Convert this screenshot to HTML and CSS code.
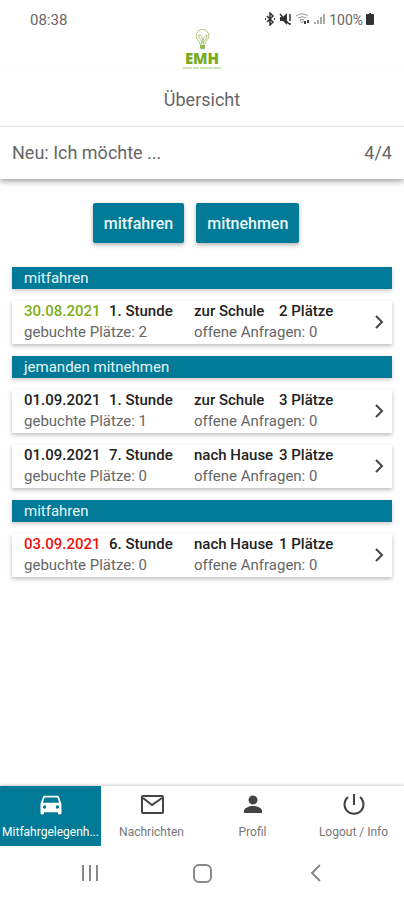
FILE: index.html
```html
<!DOCTYPE html>
<html lang="de">
<head>
  <meta charset="UTF-8">
  <meta name="viewport" content="width=device-width, initial-scale=1.0">
  <title>EMH Übersicht</title>
  <link rel="stylesheet" href="styles.css">
</head>
<body>

  <!-- Header -->
  <header>
    <div class="brand">
      <span class="time">08:38</span>
      <svg class="logo" width="40" height="42" viewBox="0 0 40 42">
        <g fill="none" stroke="#a9c77c" stroke-width="1">
          <path d="M18 16c-1-4-4-5-4-8a6 6 0 0 1 13 0c0 3-3 4-4 8z"/>
          <path d="M20 15c-1-4-4-5-3-8 3 0 4 4 3 8zM21 15c0-4 1-7 4-8 0 4-2 5-4 8z"/>
        </g>
        <path d="M18 17h5v3l-1 1h-3l-1-1z" fill="#8db64b"/>
        <text x="20" y="36" text-anchor="middle" class="logo-name">EMH</text>
        <path d="M1 40h38" stroke="#a5c66b" stroke-width="1" stroke-dasharray="9 1 6 1 12 1"/>
      </svg>
      <div class="status">
        <svg width="12" height="14" viewBox="0 0 12 14" fill="none" stroke="#333" stroke-width="1.500">
          <path d="M3 4l6 6-3 3V1l3 3-6 6"/>
          <path d="M1 7h1M10 7h1" stroke-width="2"/>
        </svg>
        <svg width="13" height="14" viewBox="0 0 13 14">
          <path d="M1 5h3l4-4v12L4 9H1z" fill="#333"/>
          <path d="M1 2l9 10M11 2v7M11 11v2" stroke="#333" stroke-width="1.500" fill="none"/>
        </svg>
        <svg width="16" height="14" viewBox="0 0 16 14">
          <path d="M1 4a10 10 0 0 1 12 0M3 6a7 7 0 0 1 8 0M5 8a4 4 0 0 1 4 0L7 11z" fill="none" stroke="#999" stroke-width="1"/>
          <path d="M10 9v3M13 8v3" stroke="#444" stroke-width="2"/>
        </svg>
        <svg width="12" height="14" viewBox="0 0 12 14" stroke="#aaa" stroke-width="2">
          <path d="M1 10v2M4 8v4M7 5v7M10 2v10"/>
        </svg>
        <span>100%</span>
        <svg width="8" height="14" viewBox="0 0 8 14">
          <path d="M3 1h2v1h2q1 0 1 1v9q0 1-1 1H1q-1 0-1-1V3q0-1 1-1h2z" fill="#333"/>
        </svg>
      </div>
    </div>
    <h1>Übersicht</h1>
    <div class="new-ride">
      <span>Neu: Ich möchte ...</span>
      <span>4/4</span>
    </div>
  </header>

  <!-- Rides -->
  <main>
    <div class="actions">
      <button type="button">mitfahren</button>
      <button type="button">mitnehmen</button>
    </div>

    <div class="rides">
      <h2>mitfahren</h2>
      <a class="ride" href="#">
        <b class="green">30.08.2021</b><b>1. Stunde</b><b>zur Schule</b><b>2 Plätze</b>
        <span>gebuchte Plätze: 2</span><span>offene Anfragen: 0</span>
        <svg class="arrow" width="10" height="14" viewBox="0 0 10 14"><path d="M2 1l6 6-6 6"/></svg>
      </a>

      <h2>jemanden mitnehmen</h2>
      <a class="ride" href="#">
        <b>01.09.2021</b><b>1. Stunde</b><b>zur Schule</b><b>3 Plätze</b>
        <span>gebuchte Plätze: 1</span><span>offene Anfragen: 0</span>
        <svg class="arrow" width="10" height="14" viewBox="0 0 10 14"><path d="M2 1l6 6-6 6"/></svg>
      </a>
      <a class="ride" href="#">
        <b>01.09.2021</b><b>7. Stunde</b><b>nach Hause</b><b>3 Plätze</b>
        <span>gebuchte Plätze: 0</span><span>offene Anfragen: 0</span>
        <svg class="arrow" width="10" height="14" viewBox="0 0 10 14"><path d="M2 1l6 6-6 6"/></svg>
      </a>

      <h2>mitfahren</h2>
      <a class="ride" href="#">
        <b class="red">03.09.2021</b><b>6. Stunde</b><b>nach Hause</b><b>1 Plätze</b>
        <span>gebuchte Plätze: 0</span><span>offene Anfragen: 0</span>
        <svg class="arrow" width="10" height="14" viewBox="0 0 10 14"><path d="M2 1l6 6-6 6"/></svg>
      </a>
    </div>
  </main>

  <!-- Tabs -->
  <nav class="tabs">
    <a class="tab active" href="#">
      <svg width="28" height="28" viewBox="0 0 24 24"><path fill="currentColor" d="M18.9 6c-.2-.6-.8-1-1.400-1h-11c-.7 0-1.200.4-1.400 1L3 12v8c0 .6.5 1 1 1h1c.6 0 1-.4 1-1v-1h12v1c0 .6.5 1 1 1h1c.6 0 1-.4 1-1v-8zM6.500 16a1.500 1.500 0 1 1 0-3 1.500 1.500 0 0 1 0 3zm11 0a1.500 1.500 0 1 1 0-3 1.500 1.500 0 0 1 0 3zM5 11l1.500-4.500h11L19 11z"/></svg>
      <span>Mitfahrgelegenh...</span>
    </a>
    <a class="tab" href="#">
      <svg width="28" height="28" viewBox="0 0 28 28" fill="none" stroke="currentColor" stroke-width="2"><rect x="4" y="6" width="21" height="17" rx="1"/><path d="M5 8l9 7 10-7"/></svg>
      <span>Nachrichten</span>
    </a>
    <a class="tab" href="#">
      <svg width="28" height="28" viewBox="0 0 28 28" fill="currentColor"><circle cx="14" cy="10" r="4.500"/><path d="M5 23v-2c0-3 5-5 9-5s9 2 9 5v2z"/></svg>
      <span>Profil</span>
    </a>
    <a class="tab" href="#">
      <svg width="28" height="28" viewBox="0 0 28 28" fill="none" stroke="currentColor" stroke-width="2"><path d="M14 4v11M8 7a9.500 9.500 0 1 0 12 0"/></svg>
      <span>Logout / Info</span>
    </a>
  </nav>

  <!-- System buttons -->
  <div class="system">
    <svg width="20" height="20" viewBox="0 0 20 20"><path d="M3 2v16M10 2v16M17 2v16"/></svg>
    <svg width="20" height="20" viewBox="0 0 20 20"><rect x="2" y="2" width="17" height="17" rx="5"/></svg>
    <svg width="20" height="20" viewBox="0 0 20 20"><path d="M16 2l-8 8 8 8"/></svg>
  </div>

</body>
</html>
```

FILE: styles.css
```css
* {
  box-sizing: border-box;
}
body {
  font-family: Roboto, sans-serif;
  background-color: #fefefe;
  color: #666;
  display: flex;
  flex-direction: column;
  min-height: 100vh;
  margin: 0;
}
a {
  color: inherit;
  text-decoration: none;
}
header {
  background-color: #fff;
  box-shadow: 0 2px 6px rgba(0, 0, 0, 0.4);
}
.brand {
  display: grid;
  grid-template-columns: 1fr 40px 1fr;
  height: 70px;
  padding: 12px 30px 0;
  border-bottom: 1px solid #fafafa;
  font-size: 14px;
  line-height: 16px;
}
.time {
  font-size: 15px;
}
.logo {
  margin-top: 16px;
}
.logo-name {
  font-family: "Open Sans", sans-serif;
  font-size: 15px;
  font-weight: 800;
  fill: #78ab1e;
}
.status {
  display: flex;
  justify-content: flex-end;
  align-items: flex-start;
  gap: 3px;
}
h1 {
  margin: 0;
  font-size: 18px;
  font-weight: 400;
  line-height: 56px;
  height: 57px;
  padding-top: 2px;
  text-align: center;
  border-bottom: 1px solid #e4e4e4;
}
.new-ride {
  display: flex;
  justify-content: space-between;
  padding: 0 12px;
  font-size: 18px;
  line-height: 52px;
}
main {
  flex: 1;
  padding: 24px 12px;
}
.actions {
  display: flex;
  justify-content: center;
  margin-bottom: 24px;
}
.actions button {
  height: 40px;
  margin-right: 12px;
  padding: 0 11px;
  border: none;
  border-radius: 2px;
  background-color: #007a96;
  color: #e8f6f9;
  font-family: inherit;
  font-size: 16px;
  font-weight: 500;
  box-shadow: 0 2px 4px rgba(0, 0, 0, 0.3);
}
.rides {
  display: flex;
  flex-direction: column;
  gap: 12px;
}
h2 {
  margin: 0;
  padding: 0 12px;
  background-color: #007a96;
  color: #e8f6f9;
  font-size: 15px;
  font-weight: 400;
  line-height: 22px;
  box-shadow: 0 2px 4px rgba(0, 0, 0, 0.2);
}
.ride {
  position: relative;
  display: grid;
  grid-template-columns: 85px 85px 85px 1fr;
  align-content: start;
  padding: 0 12px 1px;
  background-color: #fff;
  font-size: 15px;
  line-height: 21px;
  white-space: nowrap;
  box-shadow: 0 2px 4px rgba(0, 0, 0, 0.25);
}
.ride b {
  color: #222;
  font-weight: 500;
}
.ride span {
  grid-column: span 2;
}
.ride .green {
  color: #7fae1b;
}
.ride .red {
  color: #f01010;
}
.arrow {
  position: absolute;
  right: 8px;
  top: 14px;
  fill: none;
  stroke: #444;
  stroke-width: 2;
}

/* Bottom navigation */
.tabs {
  display: grid;
  grid-template-columns: repeat(4, 1fr);
  background-color: #fff;
  box-shadow: 0 -1px 3px rgba(0, 0, 0, 0.2);
}
.tab {
  display: flex;
  flex-direction: column;
  align-items: center;
  gap: 6px;
  height: 60px;
  padding-top: 4px;
  color: #444;
  font-size: 12px;
  line-height: 16px;
  white-space: nowrap;
}
.tab span {
  color: #777;
}
.tab.active,
.active span {
  color: #fff;
}
.active {
  background-color: #007a96;
}
.system {
  display: flex;
  justify-content: space-between;
  align-items: center;
  height: 54px;
  padding: 0 80px;
  background-color: #fff;
}
.system svg {
  fill: none;
  stroke: #888;
  stroke-width: 2;
}
```
